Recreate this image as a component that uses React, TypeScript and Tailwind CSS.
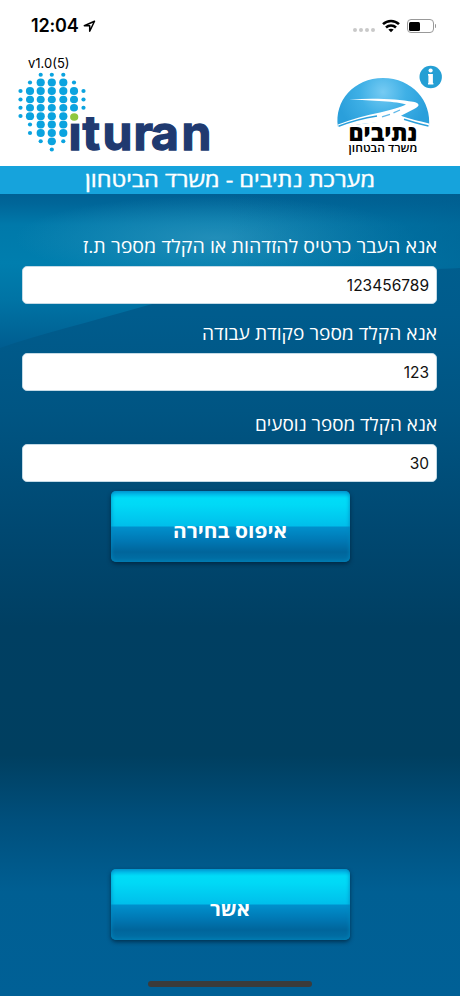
import { useState } from "react";

const fields = [
  { id: "idNumber", label: "אנא העבר כרטיס להזדהות או הקלד מספר ת.ז", value: "123456789", gap: "pt-[38px]", width: "354" },
  { id: "order", label: "אנא הקלד מספר פקודת עבודה", value: "123", gap: "pt-[15px]", width: "235" },
  { id: "riders", label: "אנא הקלד מספר נוסעים", value: "30", gap: "pt-[19px]", width: "182" },
];

// columns of the globe: x, then [y, radius] for each dot
const globe: [number, [number, number][]][] = [
  [20.5, [[91, 2.1], [99.5, 2.1], [107.7, 2.1], [116, 2.1]]],
  [30, [[82.5, 2.1], [91, 4.1], [99.5, 4], [107.7, 4], [116.2, 4.1], [124.5, 2.1], [133, 2.1]]],
  [40.7, [[74.7, 2.1], [82.5, 4.1], [91, 4.1], [99.5, 4], [107.7, 4], [116.2, 4.1], [124.5, 4.1], [133, 4.1], [141.3, 2.1]]],
  [51.8, [[74.7, 2.1], [82.5, 4.1], [91, 4.1], [99.5, 4], [107.7, 4], [116.2, 4.1], [124.5, 4.1], [133, 4.1], [141.3, 4.1], [149.6, 2.1]]],
  [63.3, [[74.7, 2.1], [82.5, 4.1], [91, 4.1], [99.5, 4], [107.7, 4], [116.2, 4.1], [124.5, 4.1], [133, 4.1], [141.3, 2.1]]],
  [74, [[82.5, 2.1], [91, 4.1], [99.5, 4], [107.7, 4]]],
  [83.5, [[91, 2.1], [99.5, 2.1], [107.7, 2.1]]],
];

function IturanLogo() {
  return (
    <svg className="block h-[86px] w-[200px] overflow-visible" viewBox="15 70 200 86">
      <text
        x="68.5 82.5 102.5 133.5 151 181.5"
        y="150.3"
        fill="#203a70"
        stroke="#203a70"
        strokeWidth="1.3"
        className="font-['Inter'] text-[48px] font-bold"
      >
        ituran
      </text>
      <rect x="67" y="108" width="15" height="15.500" fill="#fff" />
      {globe.map(([x, dots]) =>
        dots.map(([y, r]) => <ellipse key={`${x}-${y}`} cx={x} cy={y} rx={r} ry={r * 0.95} fill="#0ba3df" />)
      )}
      <ellipse cx="74.2" cy="117" rx="4.1" ry="3.8" fill="#8fc73e" />
    </svg>
  );
}

function NetivimLogo() {
  return (
    <svg className="block h-[80px] w-[96px] overflow-visible" viewBox="335 76 96 80">
      <defs>
        <radialGradient id="sky" gradientUnits="userSpaceOnUse" cx="383" cy="92" r="46">
          <stop offset="0" stopColor="#76cbf3" />
          <stop offset="0.5" stopColor="#3fb0e6" />
          <stop offset="1" stopColor="#2a9fdb" />
        </radialGradient>
      </defs>
      <path d="M338 127C334 101 354 78 383 78C412 78 432 101 429 127L404 118.500L338 127Z" fill="url(#sky)" />
      {/* road */}
      <path d="M349 99.300C372 98 398 98.500 413 101.800C420 103.300 420 106 415 108.500L401 115.800C408 118.500 419 121 429 123.500V129C412 125 398 122.500 383 122.500C367 122.500 352 125 338 129V124.500C352 119 366 115.500 380 112.500C391 110 401 107 406 104.500C398 101.300 372 101 349 99.300Z" fill="#fff" />
      <path d="M338.500 126.300C352 121 364 118 377 116M404 119.300C412 122 420 124 428.500 126" fill="none" stroke="#2a9fdb" strokeWidth="1.500" />
      <path d="M382 116.800L390 114.300M393.500 112.800L400 110" fill="none" stroke="#60b8e8" strokeWidth="1.300" />
      <text x="383" y="141.300" textAnchor="middle" textLength="69" lengthAdjust="spacingAndGlyphs" className="font-['Open_Sans',sans-serif] text-[22.500px] font-extrabold">
        נתיבים
      </text>
      <text x="383" y="152" textAnchor="middle" textLength="69" lengthAdjust="spacingAndGlyphs" className="font-['Open_Sans',sans-serif] text-[11px] font-semibold">
        משרד הבטחון
      </text>
    </svg>
  );
}

function StatusBar() {
  return (
    <div className="flex h-[52px] items-center justify-between pr-[24px] pl-[31px]">
      <div className="flex items-center gap-[5px]">
        <span className="font-['Inter'] text-[18px] leading-none font-semibold tracking-[-0.2px]">12:04</span>
        <svg className="h-[13px] w-[13px]" viewBox="0 0 13 13">
          <path d="M11.500 1.300L1.300 5.800H6.700V11.300Z" fill="none" stroke="#000" strokeWidth="1.500" strokeLinejoin="round" />
        </svg>
      </div>
      <div className="flex items-center">
        <div className="mt-[8px] mr-[7px] flex gap-[1.800px]">
          {[0, 1, 2, 3].map((n) => (
            <span key={n} className="size-[4px] rounded-full bg-[#c9c9c9]" />
          ))}
        </div>
        <svg className="mr-[7px] h-[14px] w-[18px]" viewBox="0 0 18 14">
          <path d="M1 5.200C5.500 .8 12.500 .8 17 5.200M4 8.500C6.800 5.800 11.200 5.800 14 8.500" fill="none" stroke="#000" strokeWidth="2.500" />
          <path d="M6.300 10.600C7.800 9.300 10.200 9.300 11.700 10.600L9 13.300Z" />
        </svg>
        <div className="h-[14px] w-[27px] rounded-[4px] border border-[#999] p-[1.500px]">
          <div className="h-full w-[11px] rounded-[1.500px] bg-black" />
        </div>
        <div className="ml-px h-[4px] w-[1.500px] rounded-r bg-[#999]" />
      </div>
    </div>
  );
}

// soft light sweep behind the form
function Backdrop() {
  return (
    <svg className="absolute inset-0 h-[802px] w-full" viewBox="0 194 460 802" preserveAspectRatio="none">
      <defs>
        <linearGradient id="deep" x1="0" y1="0" x2="0" y2="1">
          <stop offset="0" stopColor="#00608f" />
          <stop offset="0.150" stopColor="#005c8d" />
          <stop offset="0.270" stopColor="#005583" />
          <stop offset="0.420" stopColor="#004871" />
          <stop offset="0.540" stopColor="#003f62" />
          <stop offset="0.700" stopColor="#003f60" />
          <stop offset="0.780" stopColor="#004f7c" />
          <stop offset="0.870" stopColor="#005f93" />
          <stop offset="1" stopColor="#006096" />
        </linearGradient>
        <linearGradient id="sweep" x1="0" y1="0" x2="0" y2="1">
          <stop offset="0" stopColor="#006094" />
          <stop offset="0.070" stopColor="#00679a" />
          <stop offset="0.200" stopColor="#0079aa" />
          <stop offset="0.450" stopColor="#007eae" />
          <stop offset="0.700" stopColor="#0073a4" />
          <stop offset="1" stopColor="#005d90" />
        </linearGradient>
        <radialGradient id="glow" gradientUnits="userSpaceOnUse" cx="0" cy="0" r="1" gradientTransform="translate(215 238) scale(200 42)">
          <stop offset="0" stopColor="#3096be" stopOpacity="0.700" />
          <stop offset="1" stopColor="#3096be" stopOpacity="0" />
        </radialGradient>
        <linearGradient id="shade" x1="0" y1="0" x2="1" y2="0">
          <stop offset="0.500" stopColor="#005c8d" stopOpacity="0" />
          <stop offset="1" stopColor="#005c8d" stopOpacity="0.550" />
        </linearGradient>
      </defs>
      <rect y="194" width="460" height="802" fill="url(#deep)" />
      <path d="M0 194H460V268C340 270 220 285 145 306C90 322 40 334 0 348Z" fill="url(#sweep)" />
      <rect y="194" width="460" height="90" fill="url(#glow)" />
      <path d="M0 194H460V268C340 270 220 285 145 306C90 322 40 334 0 348Z" fill="url(#shade)" />
    </svg>
  );
}

function GlossyButton({ label, width }: { label: string; width: string }) {
  return (
    <button className="flex h-[71px] w-[239px] items-center justify-center rounded-[5px] bg-[linear-gradient(to_bottom,#00a5df_0,#00dcf8_7px,#00d9f6_14px,#00bfeb_35px,#0090cc_36px,#0078b4_50px,#00659b_61px,#0072a8_71px)] pt-[11px] shadow-[0_2px_4px_rgba(0,25,45,0.65),inset_0_0_4px_#0087bd]">
      <Label text={label} width={width} className="text-[19px] font-bold" />
    </button>
  );
}

function Label({ text, width, className }: { text: string; width: string; className: string }) {
  return (
    <svg className="block h-[30px] overflow-visible" style={{ width: Number(width) }}>
      <text
        x={Number(width) / 2}
        y="21"
        textAnchor="middle"
        textLength={width}
        lengthAdjust="spacingAndGlyphs"
        fill="#fff"
        className={`font-['Open_Sans',sans-serif] ${className}`}
      >
        {text}
      </text>
    </svg>
  );
}

export default function App() {
  const [values, setValues] = useState(fields.map((f) => f.value));

  return (
    <div className="flex h-[996px] w-[460px] flex-col overflow-hidden bg-white font-['Open_Sans',sans-serif] text-black">
      <header className="h-[166px]">
        <StatusBar />
        <div className="relative flex justify-between pr-[29px] pl-[15px]">
          <div className="pt-[18px]">
            <IturanLogo />
          </div>
          <div className="pt-[24px]">
            <NetivimLogo />
          </div>
          <span className="absolute top-[4px] left-[28px] font-['Inter'] text-[13px] leading-[14px]">v1.0(5)</span>
          <svg className="absolute top-[13px] left-[419px] size-[24px]" viewBox="0 0 24 24" aria-label="מידע">
            <circle cx="11.700" cy="12" r="11.200" fill="#249fd4" />
            <circle cx="11.600" cy="5.500" r="2.100" fill="#fff" />
            <path d="M9 9H13.900V18H14.400V19.500H9V18H9.400V10.500H9Z" fill="#fff" />
          </svg>
        </div>
      </header>

      <div className="flex h-[28px] items-center justify-center bg-[#16a3dc] pt-[2px]">
        <Label text="מערכת נתיבים - משרד הביטחון" width="290" className="text-[20px] stroke-white stroke-[0.4px]" />
      </div>

      {/* ── Form ── */}
      <main className="relative flex-1">
        <Backdrop />
        <div className="relative flex h-full flex-col items-center">
          <form className="flex flex-col pr-[23px] pl-[22px]" dir="rtl" onSubmit={(e) => e.preventDefault()}>
            {fields.map((f, i) => (
              <div key={f.id} className={`flex flex-col ${f.gap}`}>
                <label htmlFor={f.id} className="flex h-[34px]">
                  <Label text={f.label} width={f.width} className="text-[18px]" />
                </label>
                <input
                  id={f.id}
                  dir="ltr"
                  value={values[i]}
                  onChange={(e) => setValues(values.map((v, n) => (n === i ? e.target.value : v)))}
                  className="h-[38px] w-[415px] rounded-[5px] border border-[#c3dae6] bg-white px-[7px] text-right font-['Inter'] text-[15.500px] text-[#111] outline-none"
                />
              </div>
            ))}
          </form>
          <div className="pt-[9px]">
            <GlossyButton label="איפוס בחירה" width="114" />
          </div>
          <div className="mt-auto pb-[41px]">
            <GlossyButton label="אשר" width="40" />
          </div>
          <div className="mb-[9px] h-[6px] w-[164px] rounded-full bg-[#3b3b3b]" />
        </div>
      </main>
    </div>
  );
}
